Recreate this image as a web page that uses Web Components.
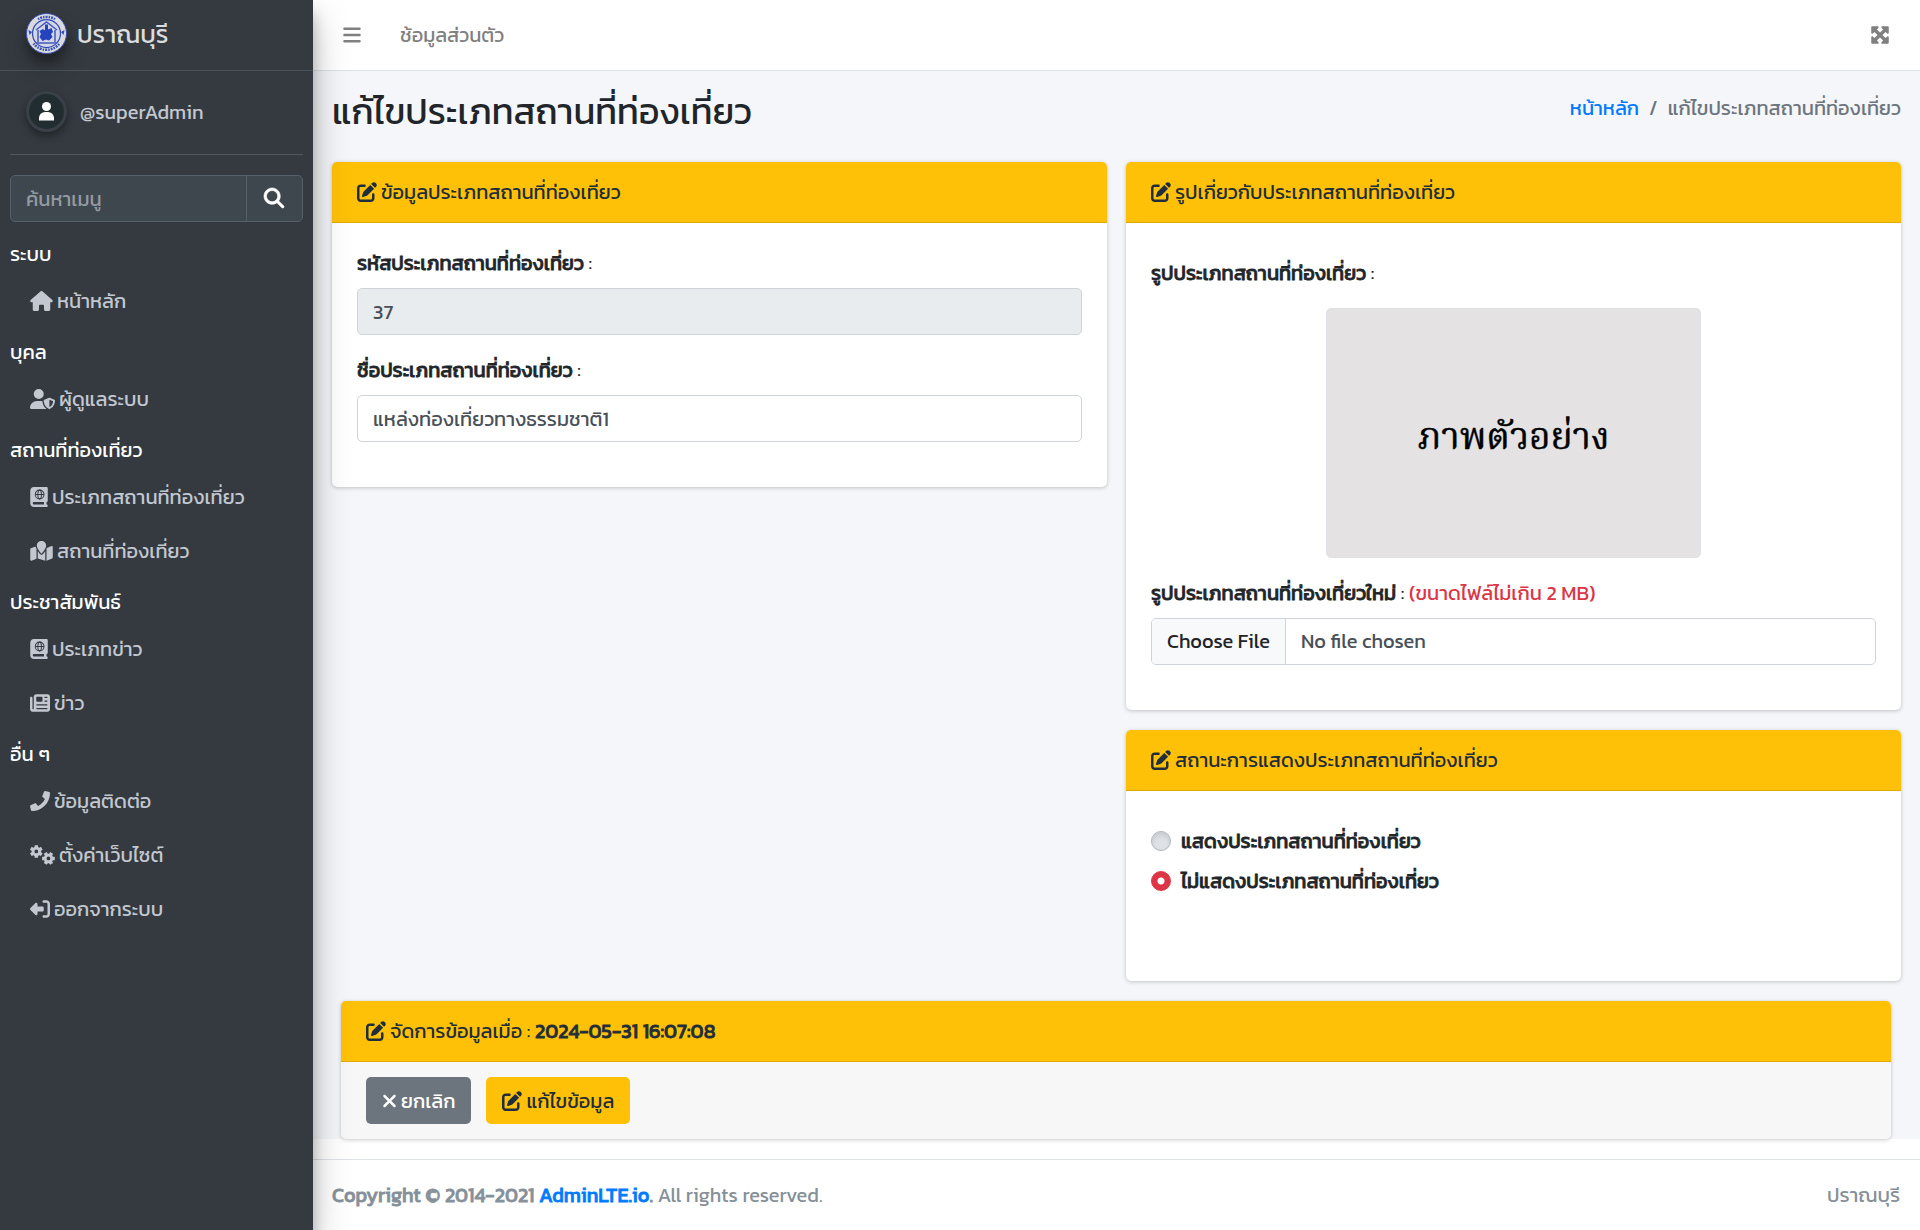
<!DOCTYPE html>
<html lang="th">
<head>
<meta charset="utf-8">
<title>แก้ไขประเภทสถานที่ท่องเที่ยว</title>
<style>
  html { height: 100%; }
  body {
    margin: 0; min-height: 100%; display: flex; background: #fff; color: #212529;
    font-family: Kanit, "Noto Sans Thai", "Noto Sans", sans-serif; font-size: 20px; line-height: 30px;
    --dark: #343a40; --warn: #ffc107; --muted: #6c757d; --line: #dee2e6; --pad: 25px;
  }
</style>
</head>
<body>
<admin-app></admin-app>
<script>
const gear = (cx, cy, turn) => {
  const pts = [];
  for (let i = 0; i < 6; i++) {
    const a = turn + i * Math.PI / 3;
    for (const [d, r] of [[-.38, 122], [-.26, 168], [.26, 168], [.38, 122]])
      pts.push(`${(cx + r * Math.cos(a + d)).toFixed(1)} ${(cy + r * Math.sin(a + d)).toFixed(1)}`);
  }
  return `M${pts.join('L')}ZM${cx - 48} ${cy}a48 48 0 1 0 96 0a48 48 0 1 0 -96 0Z`;
};
const P = d => `<path fill="currentColor" fill-rule="evenodd" d="${d}"/>`;
const ICONS = {
  bars: [448, P('M0 96C0 78.3 14.3 64 32 64H416c17.7 0 32 14.3 32 32s-14.3 32-32 32H32C14.3 128 0 113.7 0 96zM0 256c0-17.7 14.3-32 32-32H416c17.7 0 32 14.3 32 32s-14.3 32-32 32H32c-17.7 0-32-14.3-32-32zM448 416c0 17.7-14.3 32-32 32H32c-17.7 0-32-14.3-32-32s14.3-32 32-32H416c17.7 0 32 14.3 32 32z')],
  search: [512, P('M416 208c0 45.9-14.9 88.3-40 122.7L502.6 457.4c12.5 12.5 12.5 32.8 0 45.3s-32.8 12.5-45.3 0L330.7 376c-34.4 25.2-76.8 40-122.7 40C93.1 416 0 322.9 0 208S93.1 0 208 0S416 93.1 416 208zM208 352a144 144 0 1 0 0-288 144 144 0 1 0 0 288z').replace('<path', '<path stroke="currentColor" stroke-width="16"')],
  house: [576, P('M575.8 255.5c0 18-15 32.1-32 32.1h-32l.7 160.2c0 2.7-.2 5.4-.5 8.1V472c0 22.1-17.9 40-40 40H392c-22.1 0-40-17.9-40-40V384c0-17.7-14.3-32-32-32H256c-17.7 0-32 14.3-32 32v88c0 22.1-17.9 40-40 40H104c-22.1 0-40-17.9-40-40V287.6H32c-18 0-32-14-32-32.1c0-9 3-17 10-24L266.4 8c7-7 15-8 22-8s15 2 21 7L564.8 231.5c8 7 12 15 11 24z')],
  shield: [640, P('M224 256A128 128 0 1 0 224 0a128 128 0 1 0 0 256zm-45.7 48C79.8 304 0 383.8 0 482.3C0 498.7 13.3 512 29.7 512H418.3c1.8 0 3.5-.2 5.3-.5c-76.3-55.1-99.8-141-103.1-200.2c-16.1-4.8-33.1-7.3-50.7-7.3H178.3zm308.8-78.3l-120 48C358 277.4 352 286.2 352 296c0 63.3 25.9 168.8 134.8 214.2c5.9 2.5 12.6 2.5 18.5 0C614.1 464.8 640 359.3 640 296c0-9.8-6-18.6-15.1-22.3l-120-48c-5.7-2.3-12.1-2.3-17.8 0zM591.4 312c-3.9 50.7-27.2 116.7-95.4 149.7V273.8L591.4 312z')],
  atlas: [448, P('M0 96C0 43 43 0 96 0H416c17.7 0 32 14.3 32 32V352c0 17.7-14.3 32-32 32v64c17.7 0 32 14.3 32 32s-14.3 32-32 32H96c-53 0-96-43-96-96V96zM64 416c0 17.7 14.3 32 32 32H352V384H96c-17.7 0-32 14.3-32 32z') + '<g fill="none" stroke="#343a40" stroke-width="26"><circle cx="240" cy="192" r="112"/><ellipse cx="240" cy="192" rx="46" ry="112"/><path d="M128 192H352"/></g>'],
  map: [576, P('M408 120c0 54.6-73.1 151.9-105.2 192c-7.7 9.6-22 9.6-29.6 0C241.1 271.9 168 174.6 168 120C168 53.7 221.7 0 288 0s120 53.7 120 120zm8 80.4c3.5-6.9 6.7-13.8 9.6-20.6c.5-1.2 1-2.5 1.5-3.7l116-46.4C558.9 123.4 576 135 576 152V422.8c0 9.8-6 18.6-15.1 22.3L416 503V200.4zM137.6 138.3c2.4 14.1 7.2 28.3 12.8 41.5c2.9 6.8 6.1 13.7 9.6 20.6V451.8L32.9 502.7C17.1 509 0 497.4 0 480.4V209.6c0-9.8 6-18.6 15.1-22.3l122.6-49zM327.8 332c13.9-17.4 35.7-45.7 56.2-77V504.3L192 449.4V255c20.5 31.3 42.3 59.6 56.2 77c20.5 25.6 59.1 25.6 79.6 0z')],
  news: [512, P('M96 96c0-35.3 28.7-64 64-64H448c35.3 0 64 28.7 64 64V416c0 35.3-28.7 64-64 64H80c-44.2 0-80-35.8-80-80V128c0-17.7 14.3-32 32-32s32 14.3 32 32V400c0 8.8 7.2 16 16 16s16-7.2 16-16V96zm64 24v80c0 13.3 10.7 24 24 24H296c13.3 0 24-10.7 24-24V120c0-13.3-10.7-24-24-24H184c-13.3 0-24 10.7-24 24zm208-8c0 8.8 7.2 16 16 16h48c8.8 0 16-7.2 16-16s-7.2-16-16-16H384c-8.8 0-16 7.2-16 16zm0 96c0 8.8 7.2 16 16 16h48c8.8 0 16-7.2 16-16s-7.2-16-16-16H384c-8.8 0-16 7.2-16 16zM160 304c0 8.8 7.2 16 16 16H432c8.8 0 16-7.2 16-16s-7.2-16-16-16H176c-8.8 0-16 7.2-16 16zm0 96c0 8.8 7.2 16 16 16H432c8.8 0 16-7.2 16-16s-7.2-16-16-16H176c-8.8 0-16 7.2-16 16z')],
  phone: [512, P('M493.4 24.6l-104-24c-11.3-2.6-22.9 3.3-27.5 13.9l-48 112c-4.2 9.8-1.4 21.3 6.9 28l60.6 49.6c-36 76.7-98.9 140.5-177.2 177.2l-49.6-60.6c-6.8-8.3-18.2-11.1-28-6.9l-112 48C3.9 366.5-2 378.1.6 389.4l24 104C27.1 504.2 36.7 512 48 512c256.1 0 464-207.5 464-464 0-11.2-7.7-20.9-18.6-23.4z')],
  gears: [640, P(gear(162, 166, Math.PI / 6)) + P(gear(472, 344, 0))],
  logout: [512, '<g transform="matrix(-1 0 0 1 512 0)">' + P('M377.9 105.9L500.7 228.7c7.2 7.2 11.3 17.1 11.3 27.3s-4.1 20.1-11.3 27.3L377.9 406.1c-6.4 6.4-15 9.9-24 9.9c-18.7 0-33.9-15.2-33.9-33.9V320H192c-17.7 0-32-14.3-32-32V224c0-17.7 14.3-32 32-32H320V129.9c0-18.7 15.2-33.9 33.9-33.9c9 0 17.6 3.6 24 9.9zM160 96H96c-17.7 0-32 14.3-32 32V384c0 17.7 14.3 32 32 32h64c17.7 0 32 14.3 32 32s-14.3 32-32 32H96c-53 0-96-43-96-96V128C0 75 43 32 96 32h64c17.7 0 32 14.3 32 32s-14.3 32-32 32z') + '</g>'],
  edit: [512, P('M471.6 21.7c-21.9-21.9-57.3-21.9-79.2 0L362.3 51.7l97.9 97.9 30.1-30.1c21.9-21.9 21.9-57.3 0-79.2L471.6 21.7zm-299.2 220c-6.1 6.1-10.8 13.6-13.5 21.9l-29.6 88.8c-2.9 8.6-.6 18.1 5.8 24.6s15.9 8.7 24.6 5.8l88.8-29.6c8.2-2.7 15.7-7.4 21.9-13.5L437.7 172.3 339.7 74.3 172.4 241.7zM96 64C43 64 0 107 0 160V416c0 53 43 96 96 96H352c53 0 96-43 96-96V320c0-17.7-14.3-32-32-32s-32 14.3-32 32v96c0 17.7-14.3 32-32 32H96c-17.7 0-32-14.3-32-32V160c0-17.7 14.3-32 32-32h96c17.7 0 32-14.3 32-32s-14.3-32-32-32H96z')],
  close: [384, P('M342.6 150.6c12.5-12.5 12.5-32.8 0-45.3s-32.8-12.5-45.3 0L192 210.7 86.6 105.4c-12.5-12.5-32.8-12.5-45.3 0s-12.5 32.8 0 45.3L146.7 256 41.4 361.4c-12.5 12.5-12.5 32.8 0 45.3s32.8 12.5 45.3 0L192 301.3 297.4 406.6c12.5 12.5 32.8 12.5 45.3 0s12.5-32.8 0-45.3L237.3 256 342.6 150.6z')],
  expand: [512, P('M200 32H56C42.7 32 32 42.7 32 56V200c0 9.7 5.8 18.5 14.8 22.2s19.3 1.7 26.2-5.2l40-40 79 79-79 79-40-40c-6.9-6.9-17.2-8.9-26.2-5.2S32 302.3 32 312V456c0 13.3 10.7 24 24 24H200c9.7 0 18.5-5.8 22.2-14.8s1.7-19.3-5.2-26.2l-40-40 79-79 79 79-40 40c-6.9 6.9-8.9 17.2-5.2 26.2s12.5 14.8 22.2 14.8H456c13.3 0 24-10.7 24-24V312c0-9.7-5.8-18.5-14.8-22.2s-19.3-1.7-26.2 5.2l-40 40-79-79 79-79 40 40c6.9 6.9 17.2 8.9 26.2 5.2s14.8-12.5 14.8-22.2V56c0-13.3-10.7-24-24-24H312c-9.7 0-18.5 5.8-22.2 14.8s-1.7 19.3 5.2 26.2l40 40-79 79-79-79 40-40c6.9-6.9 8.9-17.2 5.2-26.2S209.7 32 200 32z')]
};

/* Bold text keeps the regular face's widths and gains weight from an outline. */
const BASE = '*{box-sizing:border-box}a{color:inherit;text-decoration:none}b,strong,.bold{font-weight:400;-webkit-text-stroke:.8px currentColor}';

function define(name, html) {
  const t = document.createElement('template');
  t.innerHTML = `<style>${BASE}</style>${html}`;
  customElements.define(name, class extends HTMLElement {
    constructor() { super(); this.attachShadow({ mode: 'open' }).append(t.content.cloneNode(true)); }
  });
}

customElements.define('fa-icon', class extends HTMLElement {
  connectedCallback() {
    const [w, body] = ICONS[this.getAttribute('name')];
    const root = this.shadowRoot || this.attachShadow({ mode: 'open' });
    root.innerHTML = `<style>:host{display:inline-flex;flex:none}svg{display:block;height:20px;overflow:visible}</style>
      <svg viewBox="0 0 ${w} 512" width="${Math.round(w * 20 / 512)}" aria-hidden="true">${body}</svg>`;
  }
});

define('side-link', `<style>
  :host { display: block; margin-bottom: 4px; color: #c2c7d0; }
  a { display: flex; align-items: center; gap: 4px; height: 50px; padding: 0 20px; white-space: nowrap; }
</style><a href="#"><slot></slot></a>`);

define('side-head', `<style>
  :host { display: flex; align-items: center; height: 44px; color: #fff; }
</style><slot></slot>`);

define('town-seal', `<style>:host{display:block;flex:none;width:41px;height:41px;border-radius:50%;box-shadow:0 13px 25px #0003,0 8px 8px #0004}svg{display:block}</style>
<svg viewBox="0 0 82 82" width="41" height="41" aria-hidden="true">
  <circle cx="41" cy="41" r="40" fill="#d9dade" stroke="#3a50b5" stroke-width="2"/>
  <path d="M15 61A33 33 0 0 0 67 61M24 12.500A33 33 0 0 1 58 12.500" fill="none" stroke="#3f55b8" stroke-width="5" stroke-dasharray="3 2 4 2"/>
  <circle cx="41" cy="41" r="28" fill="#d2d6e6" stroke="#3048b8" stroke-width="2.500"/>
  <path d="M20 34L41 18L62 34M24 34V58M58 34V58M20 60H62" fill="none" stroke="#4358bb" stroke-width="3"/>
  <path d="M38 23h6v10l7-3 3 8-4 4 3 6-7 7-6-2-7 3-6-8 3-6-3-6 7-4 4 3z" fill="#2443bd"/>
  <path d="M5 34l7 4-5 6zM77 34l-7 4 5 6z" fill="#3048b8"/>
</svg>`);

define('side-bar', `<style>
  :host { display: block; flex: none; width: 313px; background: var(--dark); color: #c2c7d0; position: relative; z-index: 2;
    box-shadow: 0 18px 35px rgba(0,0,0,.25), 0 13px 13px rgba(0,0,0,.22); }
  .brand { display: flex; align-items: center; gap: 10px; height: 71px; padding: 0 26px 4px; border-bottom: 1px solid #4b545c; color: #dbdcdd; font-size: 25px; }
  .brand span { padding-top: 2px; }
  .inner { padding: 0 10px; }
  .user { display: flex; align-items: center; gap: 13px; height: 84px; padding: 0 16px 2px; border-bottom: 1px solid #4f5962; }
  .face { width: 41px; height: 41px; border-radius: 50%; border: 3px solid #3a4047; background: #222d32; box-shadow: 0 4px 8px #0006; display: block; }
  .search { display: flex; height: 47px; margin: 20px 0 10px; border: 1px solid #56606a; border-radius: 5px; background: #3f474e; overflow: hidden; }
  input { flex: 1; min-width: 0; border: 0; background: none; padding: 0 15px; font: inherit; color: #fff; outline: 0; }
  input::placeholder { color: #939ba2; opacity: 1; }
  button { width: 56px; padding: 0 2px 1px 0; border: 0; border-left: 1px solid #56606a; background: none; color: #fff; display: flex; align-items: center; justify-content: center; }
</style>
<a class="brand" href="#"><town-seal></town-seal><span>ปราณบุรี</span></a>
<div class="inner">
  <div class="user"><svg class="face" viewBox="0 0 35 35" aria-hidden="true"><g fill="#fff"><circle cx="17.5" cy="12.500" r="4.500"/><path d="M10 26.500v-2.500a6 6 0 0 1 6-6h3a6 6 0 0 1 6 6v2.500z"/></g></svg><a href="#">@superAdmin</a></div>
  <div class="search"><input type="search" placeholder="ค้นหาเมนู" aria-label="ค้นหาเมนู"><button type="button" aria-label="ค้นหา"><fa-icon name="search"></fa-icon></button></div>
  <nav>
    <side-head>ระบบ</side-head>
    <side-link><fa-icon name="house"></fa-icon><span>หน้าหลัก</span></side-link>
    <side-head>บุคล</side-head>
    <side-link><fa-icon name="shield"></fa-icon><span>ผู้ดูแลระบบ</span></side-link>
    <side-head>สถานที่ท่องเที่ยว</side-head>
    <side-link><fa-icon name="atlas"></fa-icon><span>ประเภทสถานที่ท่องเที่ยว</span></side-link>
    <side-link><fa-icon name="map"></fa-icon><span>สถานที่ท่องเที่ยว</span></side-link>
    <side-head>ประชาสัมพันธ์</side-head>
    <side-link><fa-icon name="atlas"></fa-icon><span>ประเภทข่าว</span></side-link>
    <side-link><fa-icon name="news"></fa-icon><span>ข่าว</span></side-link>
    <side-head>อื่น ๆ</side-head>
    <side-link><fa-icon name="phone"></fa-icon><span>ข้อมูลติดต่อ</span></side-link>
    <side-link><fa-icon name="gears"></fa-icon><span>ตั้งค่าเว็บไซต์</span></side-link>
    <side-link><fa-icon name="logout"></fa-icon><span>ออกจากระบบ</span></side-link>
  </nav>
</div>`);

define('top-bar', `<style>
  :host { display: flex; align-items: center; justify-content: space-between; height: 71px; padding: 0 30px; border-bottom: 1px solid var(--line); background: #fff; color: #808080; }
  nav { display: flex; align-items: center; gap: 39px; }
  a { display: flex; }
</style>
<nav><a href="#" aria-label="เมนู"><fa-icon name="bars"></fa-icon></a><a href="#">ช้อมูลส่วนตัว</a></nav>
<a href="#" aria-label="เต็มจอ"><fa-icon name="expand"></fa-icon></a>`);

define('page-head', `<style>
  :host { display: flex; justify-content: space-between; align-items: flex-start; height: 91px; padding: 19px 19px 0; }
  h1 { margin: 0; font-size: 36px; line-height: 43px; font-weight: 400; }
  ol { display: flex; gap: 10px; list-style: none; margin: 0; padding: 3px 0 0; color: var(--muted); }
  ol a { color: #007bff; }
  li + li::before { content: "/"; padding-right: 10px; }
</style>
<h1>แก้ไขประเภทสถานที่ท่องเที่ยว</h1>
<ol><li><a href="#">หน้าหลัก</a></li><li>แก้ไขประเภทสถานที่ท่องเที่ยว</li></ol>`);

define('admin-card', `<style>
  :host { display: block; border-radius: 5px; background: #fff; box-shadow: 0 0 1px rgba(0,0,0,.13), 0 1px 4px rgba(0,0,0,.2); }
  header { display: flex; align-items: center; gap: 4px; height: 61px; padding: 0 var(--pad); background: var(--warn); color: #1f2d3d; border-bottom: 1px solid #dfa900; border-radius: 5px 5px 0 0; }
  .body { padding: var(--pad); }
  :host([foot]) .body { padding: 15px var(--pad); background: #f7f7f7; border-radius: 0 0 5px 5px; }
</style>
<header><fa-icon name="edit"></fa-icon><slot name="title"></slot></header>
<div class="body"><slot></slot></div>`);

customElements.define('text-field', class extends HTMLElement {
  connectedCallback() {
    const root = this.shadowRoot || this.attachShadow({ mode: 'open' });
    const file = this.getAttribute('type') === 'file';
    root.innerHTML = `<style>
      ${BASE}
      :host { display: block; margin-bottom: 20px; }
      label { display: block; margin-bottom: 10px; }
      em { font-style: normal; color: #dc3545; }
      input { display: block; width: 100%; height: 47px; padding: 0 15px; border: 1px solid #ced4da; border-radius: 5px; background: #fff; color: #495057; font: inherit; outline: 0; }
      input[readonly] { background: #e9ecef; }
      input[type=file] { padding: 0; overflow: hidden; line-height: 45px; }
      ::file-selector-button { height: 45px; margin: 0 15px 0 0; padding: 0 15px; border: 0; border-right: 1px solid #ced4da; background: #f8f9fa; color: #212529; font: inherit; }
    </style><label for="f"><b>${this.getAttribute('label')}</b> : ${this.hasAttribute('note') ? `<em>${this.getAttribute('note')}</em>` : ''}</label>
    <input id="f" type="${file ? 'file' : 'text'}" ${file ? '' : `value="${this.getAttribute('value')}"`} ${this.hasAttribute('readonly') ? 'readonly' : ''}>`;
  }
});

define('sample-picture', `<style>
  :host { display: block; padding-top: 10px; margin-bottom: 20px; }
  figure { margin: 0; } figcaption { margin-bottom: 20px; }
  .img { width: 375px; height: 250px; margin: 0 auto; padding-top: 14px; display: flex; align-items: center; justify-content: center; border: 1px solid #dee2e6; border-radius: 5px; background: #e4e2e3; color: #000; font: 37px/1.2 "Noto Serif Thai", "Noto Serif", serif; -webkit-text-stroke: .4px #000; }
</style><figure><figcaption><b>รูปประเภทสถานที่ท่องเที่ยว</b> :</figcaption><div class="img">ภาพตัวอย่าง</div></figure>`);

define('status-choice', `<style>
  :host { display: flex; flex-direction: column; gap: 10px; min-height: 140px; padding-top: 10px; }
  label { display: flex; align-items: center; gap: 10px; }
  input { appearance: none; width: 20px; height: 20px; margin: 0; border: 1px solid #adb5bd; border-radius: 50%; background: #dee2e6; box-shadow: inset 0 3px 4px rgba(0,0,0,.1); }
  input:checked { border-color: #dc3545; background: radial-gradient(circle, #fff 3px, #dc3545 4px); box-shadow: none; }
</style>
<label class="bold"><input type="radio" name="status">แสดงประเภทสถานที่ท่องเที่ยว</label>
<label class="bold"><input type="radio" name="status" checked>ไม่แสดงประเภทสถานที่ท่องเที่ยว</label>`);

define('action-button', `<style>
  :host { display: block; }
  button { display: flex; align-items: center; gap: 4px; height: 47px; padding: 0 16px; border: 0; border-radius: 5px; background: var(--warn); color: #1f2d3d; font: inherit; }
  :host([kind=cancel]) button { background: var(--muted); color: #fff; }
</style><button type="button"><slot></slot></button>`);

define('page-foot', `<style>
  :host { display: flex; justify-content: space-between; margin-top: 20px; padding: 20px; padding-left: 19px; border-top: 1px solid var(--line); color: #869099; }
  a { color: #007bff; }
</style><div><strong>Copyright © 2014-2021 <a href="#">AdminLTE.io</a>.</strong> All rights reserved.</div><div>ปราณบุรี</div>`);

define('admin-app', `<style>
  :host { display: flex; flex: 1; min-width: 0; }
  .page { flex: 1; min-width: 0; display: flex; flex-direction: column; }
  main { background: #f4f6f9; flex: 1; }
  .cols { display: grid; grid-template-columns: 1fr 1fr; gap: 19px; padding: 0 19px; align-items: start; }
  .stack { display: grid; gap: 20px; }
  .last { margin: 20px 29px 0 28px; }
  .row { display: flex; gap: 15px; }
</style>
<side-bar></side-bar>
<div class="page">
  <top-bar></top-bar>
  <main>
    <page-head></page-head>
    <div class="cols">
      <admin-card><span slot="title">ข้อมูลประเภทสถานที่ท่องเที่ยว</span>
        <text-field label="รหัสประเภทสถานที่ท่องเที่ยว" value="37" readonly></text-field>
        <text-field label="ชื่อประเภทสถานที่ท่องเที่ยว" value="แหล่งท่องเที่ยวทางธรรมชาติ1"></text-field>
      </admin-card>
      <div class="stack">
        <admin-card><span slot="title">รูปเกี่ยวกับประเภทสถานที่ท่องเที่ยว</span>
          <sample-picture></sample-picture>
          <text-field type="file" label="รูปประเภทสถานที่ท่องเที่ยวใหม่" note="(ขนาดไฟล์ไม่เกิน 2 MB)"></text-field>
        </admin-card>
        <admin-card><span slot="title">สถานะการแสดงประเภทสถานที่ท่องเที่ยว</span><status-choice></status-choice></admin-card>
      </div>
    </div>
    <admin-card class="last" foot><span slot="title">จัดการข้อมูลเมื่อ : <b>2024-05-31 16:07:08</b></span>
      <div class="row"><action-button kind="cancel"><fa-icon name="close"></fa-icon><span>ยกเลิก</span></action-button><action-button><fa-icon name="edit"></fa-icon><span>แก้ไขข้อมูล</span></action-button></div>
    </admin-card>
  </main>
  <page-foot></page-foot>
</div>`);
</script>
</body>
</html>
